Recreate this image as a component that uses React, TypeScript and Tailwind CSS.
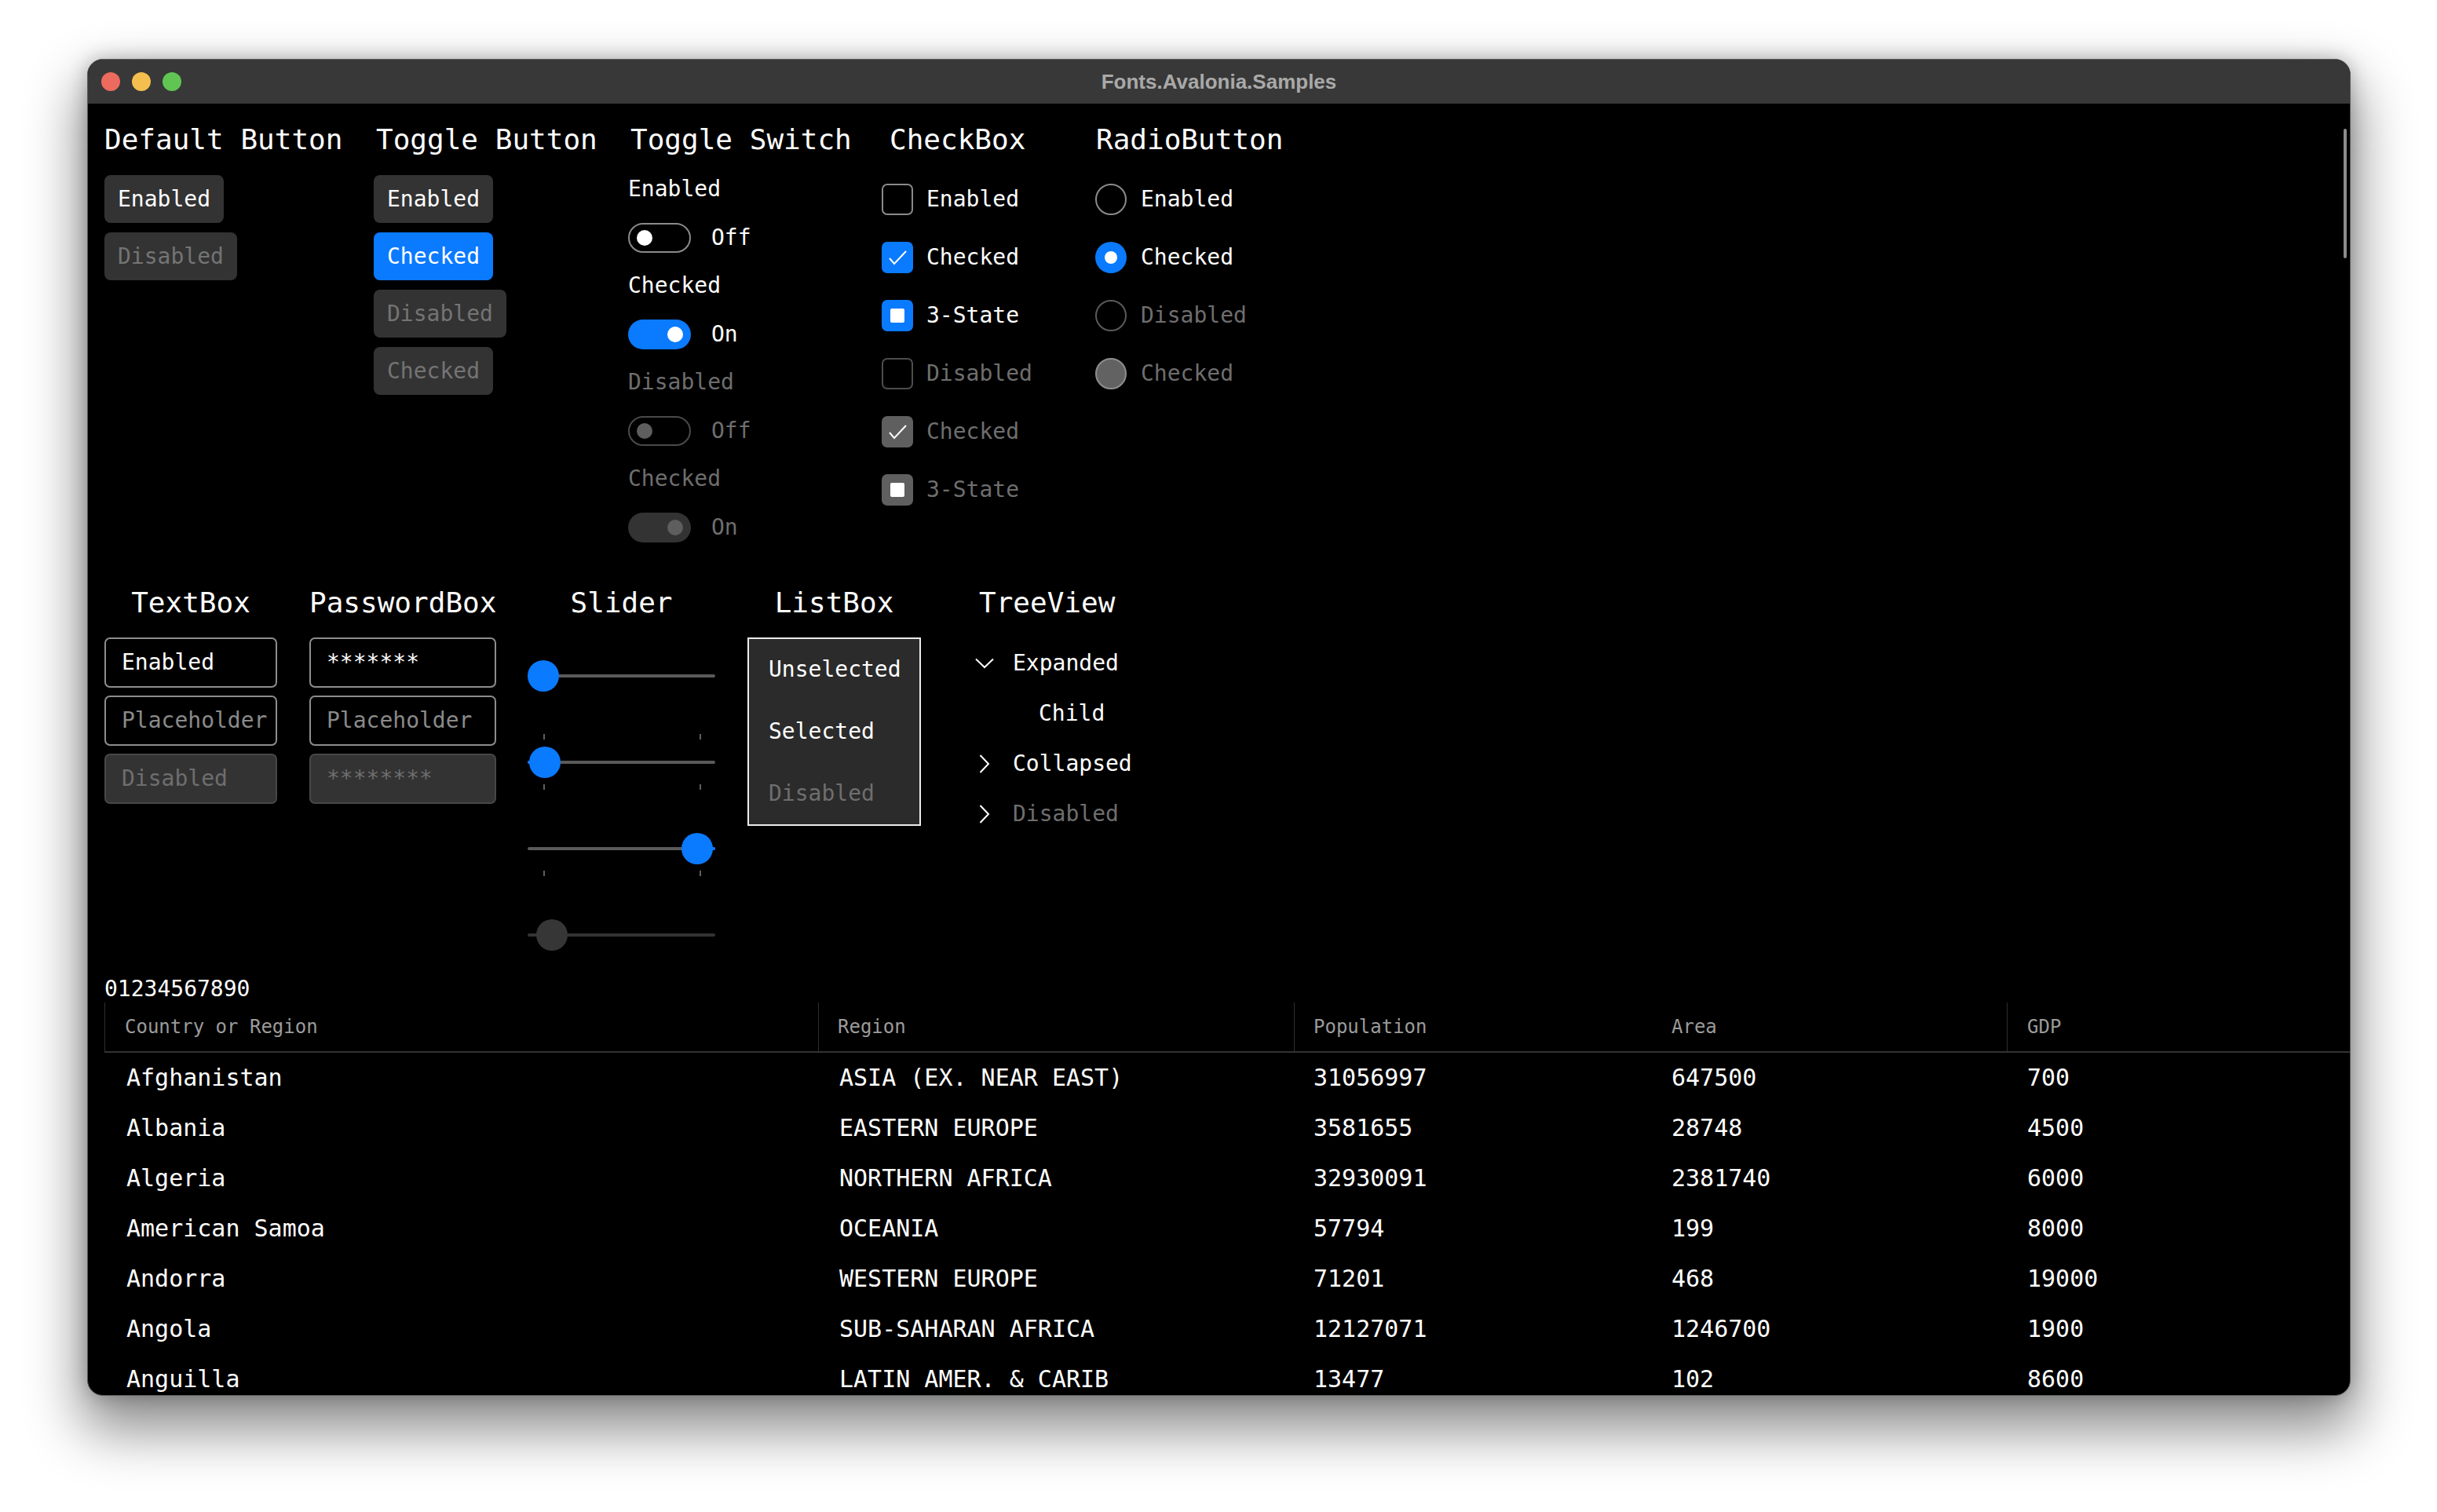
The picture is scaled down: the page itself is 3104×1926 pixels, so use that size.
import React from "react";

const mono = "font-['DejaVu_Sans_Mono','Liberation_Mono',monospace]";
const blue = "bg-[#0a7aff]";

function Heading({ children, className = "" }: { children: React.ReactNode; className?: string }) {
  return <div className={`text-[36px] leading-[44px] text-white ${className}`}>{children}</div>;
}

function Btn({ label, variant }: { label: string; variant: "normal" | "checked" | "disabled" }) {
  const cls =
    variant === "checked"
      ? `${blue} text-white`
      : variant === "disabled"
        ? "bg-[#333333] text-[#747474]"
        : "bg-[#333333] text-white";
  return (
    <div className={`flex h-[61px] items-center rounded-[8px] px-[17px] text-[28px] leading-[34px] ${cls}`}>
      {label}
    </div>
  );
}

function Toggle({ on, disabled }: { on: boolean; disabled?: boolean }) {
  let track = "border-2 border-[#8a8a8a]";
  let knob = "bg-white";
  if (on && !disabled) track = blue;
  if (!on && disabled) {
    track = "border-2 border-[#4a4a4a]";
    knob = "bg-[#5e5e5e]";
  }
  if (on && disabled) {
    track = "bg-[#333333]";
    knob = "bg-[#5e5e5e]";
  }
  return (
    <div className={`flex h-[38px] w-[80px] items-center rounded-full ${track} ${on ? "justify-end pr-[10px]" : "pl-[9px]"}`}>
      <div className={`h-[20px] w-[20px] rounded-full ${knob}`} />
    </div>
  );
}

function SwitchItem({ label, on, disabled }: { label: string; on: boolean; disabled?: boolean }) {
  const txt = disabled ? "text-[#6e6e6e]" : "text-white";
  return (
    <div className="flex flex-col">
      <div className={`h-[34px] text-[28px] leading-[34px] ${txt}`}>{label}</div>
      <div className="mt-[26px] flex items-center gap-[26px]">
        <Toggle on={on} disabled={disabled} />
        <span className={`text-[28px] leading-[34px] ${txt}`}>{on ? "On" : "Off"}</span>
      </div>
    </div>
  );
}

function Check({ state, disabled, label }: { state: "off" | "on" | "mixed"; disabled?: boolean; label: string }) {
  let box = disabled ? "border-2 border-[#4d4d4d]" : "border-2 border-[#8a8a8a]";
  if (state !== "off") box = disabled ? "bg-[#5f5f5f]" : blue;
  return (
    <div className="flex h-[40px] items-center gap-[17px]">
      <div className={`flex h-[40px] w-[40px] items-center justify-center rounded-[7px] ${box}`}>
        {state === "on" && (
          <svg width="40" height="40" viewBox="0 0 40 40">
            <polyline points="10,21 16,28 31,12" fill="none" stroke="white" strokeWidth="2" />
          </svg>
        )}
        {state === "mixed" && <div className="h-[18px] w-[18px] rounded-[2px] bg-white" />}
      </div>
      <span className={`text-[28px] leading-[34px] ${disabled ? "text-[#6e6e6e]" : "text-white"}`}>{label}</span>
    </div>
  );
}

function Radio({ checked, disabled, label }: { checked?: boolean; disabled?: boolean; label: string }) {
  let circle = "border-2 border-[#8a8a8a]";
  if (checked && !disabled) circle = blue;
  if (!checked && disabled) circle = "border-2 border-[#5a5a5a]";
  if (checked && disabled) circle = "border-2 border-[#8e8e8e] bg-[#626262]";
  return (
    <div className="flex h-[40px] items-center gap-[18px]">
      <div className={`flex h-[40px] w-[40px] items-center justify-center rounded-full ${circle}`}>
        {checked && !disabled && <div className="h-[16px] w-[16px] rounded-full bg-white" />}
      </div>
      <span className={`text-[28px] leading-[34px] ${disabled ? "text-[#6e6e6e]" : "text-white"}`}>{label}</span>
    </div>
  );
}

function Field({ text, kind, width }: { text: string; kind: "value" | "placeholder" | "disabled"; width: string }) {
  const cls =
    kind === "disabled"
      ? "border-[#474747] bg-[#333333] text-[#6e6e6e]"
      : kind === "placeholder"
        ? "border-[#8d8d8d] text-[#8a8a8a]"
        : "border-[#8d8d8d] text-white";
  return (
    <div className={`flex h-[64px] items-center overflow-hidden whitespace-nowrap rounded-[7px] border-2 pl-[20px] text-[28px] leading-[34px] ${width} ${cls}`}>
      {text}
    </div>
  );
}

function Slider({
  thumb,
  ticks,
  disabled,
  fillLeft,
  fillRight,
}: {
  thumb: number;
  ticks?: "both" | "bottom";
  disabled?: boolean;
  fillLeft?: boolean;
  fillRight?: boolean;
}) {
  const tick = "absolute h-[7px] w-[2px] bg-[#5f5f5f]";
  return (
    <div className="relative h-[40px] w-[239px]">
      <div className={`absolute left-0 right-0 top-[18px] h-[4px] rounded-full ${disabled ? "bg-[#333333]" : "bg-[#5a5a5a]"}`} />
      {fillLeft && <div className={`absolute left-0 top-[18px] h-[4px] w-[8px] rounded-full ${blue}`} />}
      {fillRight && <div className={`absolute right-0 top-[18px] h-[4px] w-[8px] rounded-full ${blue}`} />}
      <div
        className={`absolute top-0 h-[40px] w-[40px] rounded-full ${disabled ? "bg-[#363636]" : blue}`}
        style={{ left: thumb }}
      />
      {ticks === "both" && (
        <>
          <div className={`${tick} left-[20px] top-[-16px]`} />
          <div className={`${tick} left-[219px] top-[-16px]`} />
        </>
      )}
      {ticks && (
        <>
          <div className={`${tick} left-[20px] top-[48px]`} />
          <div className={`${tick} left-[219px] top-[48px]`} />
        </>
      )}
    </div>
  );
}

function TreeRow({ label, icon, indent, disabled }: { label: string; icon?: "down" | "right"; indent?: boolean; disabled?: boolean }) {
  return (
    <div className="flex h-[64px] items-center">
      <div className="flex w-[48px] items-center">
        {icon === "down" && (
          <svg width="24" height="14" viewBox="0 0 24 14">
            <polyline points="1,1.5 12,12 23,1.5" fill="none" stroke="white" strokeWidth="2" />
          </svg>
        )}
        {icon === "right" && (
          <svg width="14" height="24" viewBox="0 0 14 24" className="ml-[5px]">
            <polyline points="1.5,1 12,12 1.5,23" fill="none" stroke="white" strokeWidth="2" />
          </svg>
        )}
      </div>
      <span className={`text-[28px] leading-[34px] ${indent ? "ml-[33px]" : ""} ${disabled ? "text-[#6e6e6e]" : "text-white"}`}>
        {label}
      </span>
    </div>
  );
}

const rows = [
  ["Afghanistan", "ASIA (EX. NEAR EAST)", "31056997", "647500", "700"],
  ["Albania", "EASTERN EUROPE", "3581655", "28748", "4500"],
  ["Algeria", "NORTHERN AFRICA", "32930091", "2381740", "6000"],
  ["American Samoa", "OCEANIA", "57794", "199", "8000"],
  ["Andorra", "WESTERN EUROPE", "71201", "468", "19000"],
  ["Angola", "SUB-SAHARAN AFRICA", "12127071", "1246700", "1900"],
  ["Anguilla", "LATIN AMER. & CARIB", "13477", "102", "8600"],
];

const cols = [
  { w: "w-[909px]", head: "border-[#2e2e2e] pl-[25px]", cell: "pl-[27px]" },
  { w: "w-[606px]", head: "border-[#2e2e2e] pl-[24px]", cell: "pl-[26px]" },
  { w: "w-[456px]", head: "border-[#2e2e2e] pl-[24px]", cell: "pl-[24px]" },
  { w: "w-[452px]", head: "border-transparent pl-[24px]", cell: "pl-[24px]" },
  { w: "flex-1", head: "border-[#2e2e2e] pl-[25px]", cell: "pl-[25px]" },
];

function Table() {
  const heads = ["Country or Region", "Region", "Population", "Area", "GDP"];
  return (
    <div className="flex flex-col">
      <div className="flex h-[64px] border-b-2 border-[#333333]">
        {heads.map((h, i) => (
          <div key={h} className={`flex items-center border-l text-[24px] leading-[30px] text-[#9b9b9b] ${cols[i].w} ${cols[i].head}`}>
            {h}
          </div>
        ))}
      </div>
      {rows.map((r) => (
        <div key={r[0]} className="flex h-[64px]">
          {r.map((c, i) => (
            <div key={i} className={`flex items-center border-l border-transparent text-[30px] leading-[36px] text-white ${cols[i].w} ${cols[i].cell}`}>
              {c}
            </div>
          ))}
        </div>
      ))}
    </div>
  );
}

export default function App() {
  return (
    <div className="h-[1926px] w-[3104px] overflow-hidden bg-white pl-[111px] pt-[75px]">
      <div className="flex h-[1703px] w-[2883px] flex-col overflow-hidden rounded-[20px] border border-[#5c5c5c] bg-black shadow-[0_36px_70px_8px_rgba(0,0,0,0.45),0_0_24px_rgba(0,0,0,0.25)]">
        <div className="relative flex h-[56px] shrink-0 items-center bg-[#383838] pl-[17px]">
          <div className="flex items-center gap-[15px]">
            <div className="h-[24px] w-[24px] rounded-full bg-[#ec6a5e]" />
            <div className="h-[24px] w-[24px] rounded-full bg-[#f4bf4f]" />
            <div className="h-[24px] w-[24px] rounded-full bg-[#61c554]" />
          </div>
          <div className="absolute inset-0 flex items-center justify-center font-['Liberation_Sans',Arial,sans-serif] text-[26px] font-bold text-[#a9a9a9]">
            Fonts.Avalonia.Samples
          </div>
        </div>

        <div className={`relative flex flex-1 flex-col overflow-hidden pl-[21px] pt-[24px] ${mono}`}>
          <div className="absolute right-[4px] top-[32px] h-[165px] w-[4px] rounded-full bg-[#8c8c8c]" />

          {/* first row */}
          <div className="flex items-start">
            <div className="w-[343px] shrink-0">
              <Heading>Default Button</Heading>
              <div className="mt-[23px] flex flex-col items-start gap-[12px]">
                <Btn label="Enabled" variant="normal" />
                <Btn label="Disabled" variant="disabled" />
              </div>
            </div>
            <div className="w-[324px] shrink-0">
              <Heading className="pl-[3px]">Toggle Button</Heading>
              <div className="mt-[23px] flex flex-col items-start gap-[12px]">
                <Btn label="Enabled" variant="normal" />
                <Btn label="Checked" variant="checked" />
                <Btn label="Disabled" variant="disabled" />
                <Btn label="Checked" variant="disabled" />
              </div>
            </div>
            <div className="w-[323px] shrink-0">
              <Heading className="pl-[3px]">Toggle Switch</Heading>
              <div className="mt-[24px] flex flex-col gap-[25px]">
                <SwitchItem label="Enabled" on={false} />
                <SwitchItem label="Checked" on />
                <SwitchItem label="Disabled" on={false} disabled />
                <SwitchItem label="Checked" on disabled />
              </div>
            </div>
            <div className="w-[272px] shrink-0">
              <Heading className="pl-[10px]">CheckBox</Heading>
              <div className="mt-[34px] flex flex-col gap-[34px]">
                <Check state="off" label="Enabled" />
                <Check state="on" label="Checked" />
                <Check state="mixed" label="3-State" />
                <Check state="off" disabled label="Disabled" />
                <Check state="on" disabled label="Checked" />
                <Check state="mixed" disabled label="3-State" />
              </div>
            </div>
            <div className="shrink-0">
              <Heading className="pl-[1px]">RadioButton</Heading>
              <div className="mt-[34px] flex flex-col gap-[34px]">
                <Radio label="Enabled" />
                <Radio checked label="Checked" />
                <Radio disabled label="Disabled" />
                <Radio checked disabled label="Checked" />
              </div>
            </div>
          </div>

          {/* second row */}
          <div className="mt-[55px] flex items-start">
            <div className="w-[220px] shrink-0">
              <Heading className="text-center">TextBox</Heading>
              <div className="mt-[22px] flex flex-col gap-[10px]">
                <Field text="Enabled" kind="value" width="w-[220px]" />
                <Field text="Placeholder" kind="placeholder" width="w-[220px]" />
                <Field text="Disabled" kind="disabled" width="w-[220px]" />
              </div>
            </div>
            <div className="ml-[41px] w-[238px] shrink-0">
              <Heading className="text-center">PasswordBox</Heading>
              <div className="mt-[22px] flex flex-col gap-[10px]">
                <Field text="*******" kind="value" width="w-[238px]" />
                <Field text="Placeholder" kind="placeholder" width="w-[238px]" />
                <Field text="********" kind="disabled" width="w-[238px]" />
              </div>
            </div>
            <div className="ml-[40px] w-[239px] shrink-0">
              <Heading className="text-center">Slider</Heading>
              <div className="mt-[51px] flex flex-col gap-[70px]">
                <Slider thumb={0} />
                <Slider thumb={2} ticks="both" fillLeft />
                <Slider thumb={196} ticks="bottom" fillRight />
                <Slider thumb={11} disabled />
              </div>
            </div>
            <div className="ml-[41px] w-[221px] shrink-0">
              <Heading className="text-center">ListBox</Heading>
              <div className="mt-[22px] flex h-[240px] flex-col border-2 border-[#ececec] bg-[#2b2b2b] text-[28px] leading-[34px]">
                <div className="flex flex-1 items-center pl-[25px] text-white">Unselected</div>
                <div className="flex flex-1 items-center pl-[25px] text-white">Selected</div>
                <div className="flex flex-1 items-center pl-[25px] text-[#6e6e6e]">Disabled</div>
              </div>
            </div>
            <div className="ml-[69px] shrink-0">
              <Heading className="pl-[5px]">TreeView</Heading>
              <div className="mt-[23px] flex flex-col">
                <TreeRow icon="down" label="Expanded" />
                <TreeRow indent label="Child" />
                <TreeRow icon="right" label="Collapsed" />
                <TreeRow icon="right" label="Disabled" disabled />
              </div>
            </div>
          </div>

          <div className="mt-[32px] h-[34px] text-[28px] leading-[34px] text-white">01234567890</div>

          <Table />
        </div>
      </div>
    </div>
  );
}
